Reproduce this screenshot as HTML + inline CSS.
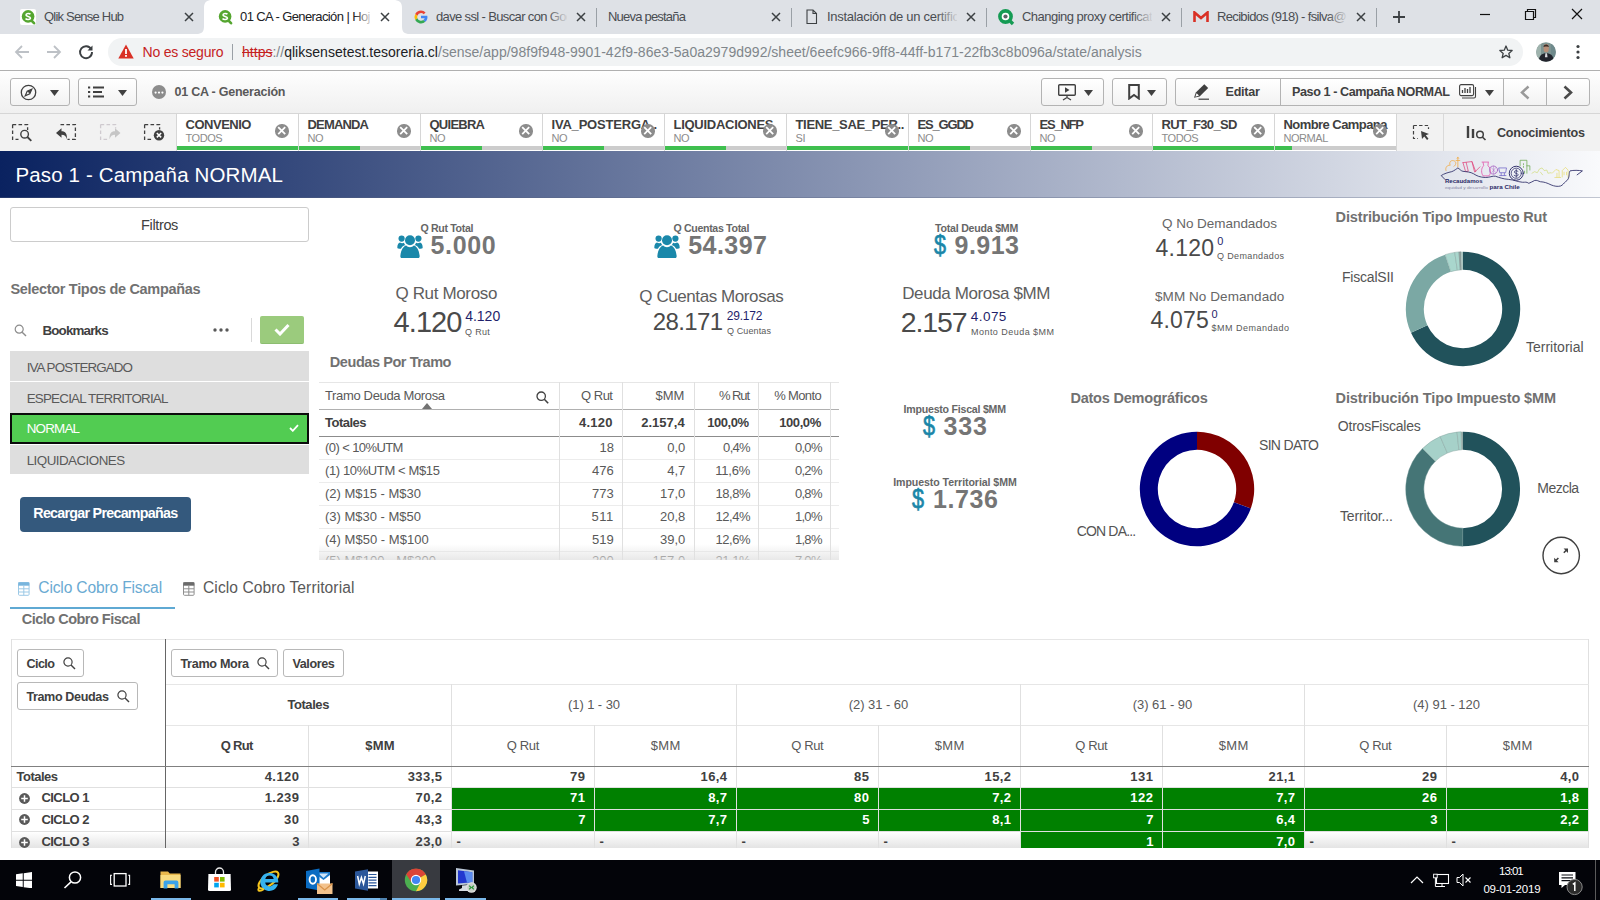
<!DOCTYPE html>
<html>
<head>
<meta charset="utf-8">
<title>01 CA - Generación</title>
<style>
*{box-sizing:border-box;margin:0;padding:0}
html,body{width:1600px;height:900px;overflow:hidden;background:#fff;font-family:"Liberation Sans",sans-serif;color:#595959}
.abs{position:absolute}
#root{position:relative;width:1600px;height:900px;overflow:hidden;background:#fff}
/* chrome */
#tabbar{position:absolute;left:0;top:0;width:1600px;height:34px;background:#dee1e6}
.tab{position:absolute;top:0;height:34px;font-size:13px;color:#4a4d52;white-space:nowrap}
.tab .tt{position:absolute;left:44px;top:9px;width:118px;overflow:hidden;white-space:nowrap}
.tab .x{position:absolute;left:184px;top:8px;font-size:15px;color:#3c4043}
.tab .sep{position:absolute;left:196px;top:8px;width:1px;height:19px;background:#9aa0a6}
#addr{position:absolute;left:0;top:34px;width:1600px;height:36px;background:#fff}
#addrline{position:absolute;left:0;top:70px;width:1600px;height:1px;background:#b0b0b0}
#omni{position:absolute;left:108px;top:4px;width:1415px;height:28px;border-radius:14px;background:#f1f3f4}
/* qlik toolbar */
#qtb{position:absolute;left:0;top:71px;width:1600px;height:42px;background:linear-gradient(#fefefe,#f0f0f0)}
.qbtn{position:absolute;top:7px;height:28px;border:1px solid #b3b3b3;border-radius:3px;background:linear-gradient(#fff,#f2f2f2)}
#selbar{position:absolute;left:0;top:113px;width:1600px;height:38px;background:#f2f2f2;border-top:1px solid #d6d6d6}
.sel{position:absolute;top:0;height:37px;width:121px;background:#fff;box-shadow:1px 0 0 #d6d6d6,-1px 0 0 #d6d6d6}
.sel .n{position:absolute;left:8.5px;top:3px;font-size:13px;font-weight:bold;color:#404040;white-space:nowrap}
.sel .v{position:absolute;left:8.5px;top:18px;font-size:11px;color:#8c8c8c;white-space:nowrap;letter-spacing:-0.45px}
.sel .bar{position:absolute;left:0;top:32px;height:4px;width:121px;background:#cccccc}
.sel .bar i{display:block;height:4px;background:#3fbf4f}
.sel .cx{position:absolute;left:98.3px;top:10.2px;width:13.4px;height:13.4px;border-radius:50%;background:#8c8c8c}
#titleband{position:absolute;left:0;top:151px;width:1600px;height:47px;background:linear-gradient(90deg,#0a2260 0%,#0d2562 1.5%,#f9fafc 100%);border-bottom:1px solid rgba(90,100,130,0.35)}
#titleband .t{position:absolute;left:15.5px;top:11.7px;font-size:20.5px;color:#fff;white-space:nowrap}
.h{position:absolute;font-size:14px;font-weight:bold;color:#717171;white-space:nowrap}
.txt{position:absolute;white-space:nowrap}
#taskbar{position:absolute;left:0;top:860px;width:1600px;height:40px;background:#030409}
</style>
</head>
<body>
<div id="root">
<div id="tabbar">
  <!-- active tab shape -->
  <svg class="abs" style="left:196px;top:0" width="214" height="34"><path d="M0 34 C6 34 8 32 8 26 L8 8 C8 2 11 0 16 0 L197 0 C203 0 206 2 206 8 L206 26 C206 32 208 34 214 34 Z" fill="#fff"/></svg>
  <!-- tab1 -->
  <div class="tab" style="left:8px;width:195px"><svg class="abs" style="left:12px;top:9px" width="16" height="16"><rect x="0" y="0" width="16" height="16" rx="2" fill="#fff"/><circle cx="8.1" cy="7.4" r="6.3" fill="#55a630"/><path d="M10.5 10.5L14 14.2" stroke="#55a630" stroke-width="2.6" stroke-linecap="round"/><path d="M10.4 5.3C9.6 4.2 6 4.1 6 6C6 7.9 10.4 6.9 10.4 9C10.4 10.9 6.4 10.8 5.6 9.5" fill="none" stroke="#fff" stroke-width="1.6"/></svg><span class="tt" style="left:36px"><span style="letter-spacing:-0.79px;display:inline-block">Qlik Sense Hub</span></span><svg class="abs" style="left:176px;top:12px" width="10" height="10"><path d="M1 1L9 9M9 1L1 9" stroke="#3c4043" stroke-width="1.5"/></svg></div>
  <!-- tab2 active -->
  <div class="tab" style="left:204px;width:195px"><svg class="abs" style="left:13px;top:9px" width="16" height="16"><circle cx="8.1" cy="7.4" r="6.3" fill="#55a630"/><path d="M10.5 10.5L14 14.2" stroke="#55a630" stroke-width="2.6" stroke-linecap="round"/><path d="M10.4 5.3C9.6 4.2 6 4.1 6 6C6 7.9 10.4 6.9 10.4 9C10.4 10.9 6.4 10.8 5.6 9.5" fill="none" stroke="#fff" stroke-width="1.6"/></svg><span class="tt" style="left:36px;width:130px;color:#202124"><span style="letter-spacing:-0.60px;display:inline-block">01 CA - Generación | Hoj</span></span><div class="abs" style="left:150px;top:6px;width:20px;height:22px;background:linear-gradient(90deg,rgba(255,255,255,0),#fff)"></div><svg class="abs" style="left:176px;top:12px" width="10" height="10"><path d="M1 1L9 9M9 1L1 9" stroke="#3c4043" stroke-width="1.5"/></svg></div>
  <!-- tab3 -->
  <div class="tab" style="left:401px;width:195px"><svg class="abs" style="left:12px;top:9px" width="16" height="16" viewBox="0 0 16 16"><path d="M8 1.5A6.5 6.5 0 0 1 12.6 3.4L10.7 5.2A3.9 3.9 0 0 0 8 4.1Z" fill="#ea4335"/><path d="M8 1.5A6.5 6.5 0 0 0 2.2 5.1L4.4 6.8A3.9 3.9 0 0 1 8 4.1Z" fill="#ea4335"/><path d="M2.2 5.1A6.5 6.5 0 0 0 2.2 10.9L4.4 9.2A3.9 3.9 0 0 1 4.4 6.8Z" fill="#fbbc05"/><path d="M2.2 10.9A6.5 6.5 0 0 0 12.4 12.8L10.3 11.1A3.9 3.9 0 0 1 4.4 9.2Z" fill="#34a853"/><path d="M14.3 6.7H8V9.3H11.7A3.5 3.5 0 0 1 10.3 11.1L12.4 12.8A6.5 6.5 0 0 0 14.3 6.7Z" fill="#4285f4"/></svg><span class="tt" style="left:35px;width:131px"><span style="letter-spacing:-0.64px;display:inline-block">dave ssl - Buscar con Goo</span></span><div class="abs" style="left:146px;top:6px;width:22px;height:22px;background:linear-gradient(90deg,rgba(222,225,230,0),#dee1e6)"></div><svg class="abs" style="left:175px;top:12px" width="10" height="10"><path d="M1 1L9 9M9 1L1 9" stroke="#3c4043" stroke-width="1.5"/></svg><div class="sep" style="left:195px"></div></div>
  <!-- tab4 -->
  <div class="tab" style="left:596px;width:195px"><span class="tt" style="left:12px"><span style="letter-spacing:-0.79px;display:inline-block">Nueva pestaña</span></span><svg class="abs" style="left:175px;top:12px" width="10" height="10"><path d="M1 1L9 9M9 1L1 9" stroke="#3c4043" stroke-width="1.5"/></svg><div class="sep" style="left:195px"></div></div>
  <!-- tab5 -->
  <div class="tab" style="left:791px;width:195px"><svg class="abs" style="left:14.5px;top:8.5px" width="12" height="16"><path d="M1 1H7L10.5 4.5V14.5H1Z M7 1V4.5H10.5" fill="none" stroke="#3c4043" stroke-width="1.1"/></svg><span class="tt" style="left:36px;width:130px"><span style="letter-spacing:-0.30px;display:inline-block">Instalación de un certific</span></span><div class="abs" style="left:146px;top:6px;width:22px;height:22px;background:linear-gradient(90deg,rgba(222,225,230,0),#dee1e6)"></div><svg class="abs" style="left:175px;top:12px" width="10" height="10"><path d="M1 1L9 9M9 1L1 9" stroke="#3c4043" stroke-width="1.5"/></svg><div class="sep" style="left:195px"></div></div>
  <!-- tab6 -->
  <div class="tab" style="left:986px;width:195px"><svg class="abs" style="left:11px;top:8px" width="18" height="18"><circle cx="8.5" cy="8.5" r="5.6" fill="#fff" stroke="#159b54" stroke-width="3.6"/><circle cx="8.5" cy="8.5" r="2.1" fill="#5f6368"/><path d="M12 12 L16 16" stroke="#159b54" stroke-width="3.4"/></svg><span class="tt" style="left:36px;width:130px"><span style="letter-spacing:-0.52px;display:inline-block">Changing proxy certificat</span></span><div class="abs" style="left:146px;top:6px;width:22px;height:22px;background:linear-gradient(90deg,rgba(222,225,230,0),#dee1e6)"></div><svg class="abs" style="left:175px;top:12px" width="10" height="10"><path d="M1 1L9 9M9 1L1 9" stroke="#3c4043" stroke-width="1.5"/></svg><div class="sep" style="left:195px"></div></div>
  <!-- tab7 -->
  <div class="tab" style="left:1181px;width:195px"><svg class="abs" style="left:12px;top:11px" width="16" height="12"><path d="M1.5 11V1.5L8 7L14.5 1.5V11" fill="none" stroke="#d93025" stroke-width="2.6"/></svg><span class="tt" style="left:36px;width:130px"><span style="letter-spacing:-0.66px;display:inline-block">Recibidos (918) - fsilva@</span></span><div class="abs" style="left:146px;top:6px;width:22px;height:22px;background:linear-gradient(90deg,rgba(222,225,230,0),#dee1e6)"></div><svg class="abs" style="left:175px;top:12px" width="10" height="10"><path d="M1 1L9 9M9 1L1 9" stroke="#3c4043" stroke-width="1.5"/></svg><div class="sep" style="left:195px"></div></div>
  <!-- plus -->
  <svg class="abs" style="left:1392px;top:10px" width="14" height="14"><path d="M7 1V13M1 7H13" stroke="#3c4043" stroke-width="1.8"/></svg>
  <!-- window ctrls -->
  <svg class="abs" style="left:1479px;top:8px" width="12" height="12"><path d="M1 6.5H11" stroke="#111" stroke-width="1.2"/></svg>
  <svg class="abs" style="left:1524px;top:8px" width="13" height="13"><path d="M1.5 3.5H9.5V11.5H1.5Z M3.5 3.5V1.5H11.5V9.5H9.5" fill="none" stroke="#111" stroke-width="1.2"/></svg>
  <svg class="abs" style="left:1571px;top:8px" width="12" height="12"><path d="M1 1L11 11M11 1L1 11" stroke="#111" stroke-width="1.2"/></svg>
</div>
<div id="addr">
  <svg class="abs" style="left:14px;top:10px" width="16" height="16"><path d="M15 8H2M8 2L2 8L8 14" fill="none" stroke="#bdc1c6" stroke-width="1.8"/></svg>
  <svg class="abs" style="left:46px;top:10px" width="16" height="16"><path d="M1 8H14M8 2L14 8L8 14" fill="none" stroke="#bdc1c6" stroke-width="1.8"/></svg>
  <svg class="abs" style="left:78px;top:10px" width="16" height="16"><path d="M13.2 5.2A6 6 0 1 0 14 8" fill="none" stroke="#3c4043" stroke-width="1.9"/><path d="M14.5 1.5V6.5H9.5Z" fill="#3c4043"/></svg>
  <div id="omni">
    <svg class="abs" style="left:10px;top:6px" width="16" height="15"><path d="M8 0.5L15.7 14.5H0.3Z" fill="#d93025"/><rect x="7.1" y="5" width="1.8" height="5" fill="#fff"/><rect x="7.1" y="11" width="1.8" height="1.8" fill="#fff"/></svg>
    <div class="txt" style="letter-spacing:-0.21px;left:34.5px;top:6px;font-size:14px;color:#c5221f">No es seguro</div>
    <div class="abs" style="left:124px;top:6px;width:1px;height:16px;background:#9aa0a6"></div>
    <div class="txt" style="letter-spacing:0.02px;left:134px;top:6px;font-size:14px;color:#80868b"><span style="color:#c5221f;text-decoration:line-through">https</span>://<span style="color:#202124">qliksensetest.tesoreria.cl</span>/sense/app/98f9f948-9901-42f9-86e3-5a0a2979d992/sheet/6eefc966-9ff8-44ff-b171-22fb3c8b096a/state/analysis</div>
    <svg class="abs" style="left:1390.7px;top:7px" width="14" height="14" viewBox="0 0 16 16"><path d="M8 1.2L10 5.9L15 6.3L11.2 9.6L12.4 14.6L8 11.9L3.6 14.6L4.8 9.6L1 6.3L6 5.9Z" fill="none" stroke="#3c4043" stroke-width="1.5" stroke-linejoin="round"/></svg>
  </div>
  <svg class="abs" style="left:1535.7px;top:8px" width="20" height="20"><defs><clipPath id="avc"><circle cx="10" cy="10" r="9.8"/></clipPath></defs><g clip-path="url(#avc)"><rect width="20" height="20" fill="#7d9492"/><rect x="0" width="5" height="20" fill="#9fb3ad"/><rect x="15" width="5" height="20" fill="#6f8a8c"/><path d="M7.6 5.2a2.6 3.1 0 0 1 5.2 0v2a2.6 3.1 0 0 1 -5.2 0Z" fill="#b98f78"/><path d="M7.4 5.2C7.6 3.2 9 2.6 10.2 2.6S12.9 3.400000000000001 13 5.2C12 4.4 8.5 4.4 7.4 5.2Z" fill="#3a2d27"/><path d="M2.5 20C3 13 6 11.2 10.2 11.2S17.5 13 18 20Z" fill="#22242c"/><path d="M9.4 11.2h1.6l0.5 4h-2.600000000000001Z" fill="#d9d9de"/></g></svg>
  <svg class="abs" style="left:1576px;top:10px" width="4" height="16"><circle cx="2" cy="2.5" r="1.6" fill="#3c4043"/><circle cx="2" cy="8" r="1.6" fill="#3c4043"/><circle cx="2" cy="13.5" r="1.6" fill="#3c4043"/></svg>
</div>
<div id="addrline"></div>
<div id="qtb">
  <div class="qbtn" style="left:10px;width:60px"><svg class="abs" style="left:9px;top:5px" width="17" height="17"><circle cx="8.5" cy="8.5" r="7.2" fill="none" stroke="#404040" stroke-width="1.3"/><path d="M11.8 5.2L9.8 9.8L5.2 11.8L7.2 7.2Z" fill="none" stroke="#404040" stroke-width="1.2"/><path d="M11.8 5.2L9.8 9.8L7.2 7.2Z" fill="#404040"/></svg><svg class="abs" style="left:39px;top:11px" width="9" height="6"><path d="M0 0H9L4.5 6Z" fill="#404040"/></svg></div>
  <div class="qbtn" style="left:78px;width:59px"><svg class="abs" style="left:9px;top:7px" width="16" height="12"><path d="M5 1.5H16M5 6H14M5 10.5H16" stroke="#404040" stroke-width="1.9"/><rect x="0" y="0.5" width="2.2" height="2" fill="#404040"/><rect x="0" y="5" width="2.2" height="2" fill="#404040"/><rect x="0" y="9.5" width="2.2" height="2" fill="#404040"/></svg><svg class="abs" style="left:39px;top:11px" width="9" height="6"><path d="M0 0H9L4.5 6Z" fill="#404040"/></svg></div>
  <svg class="abs" style="left:152px;top:14px" width="14" height="14"><circle cx="7" cy="7" r="7" fill="#8c8c8c"/><circle cx="3.6" cy="7.6" r="1.1" fill="#fff"/><circle cx="7" cy="7.6" r="1.1" fill="#fff"/><circle cx="10.4" cy="7.6" r="1.1" fill="#fff"/></svg>
  <div class="txt" style="letter-spacing:-0.23px;left:174.5px;top:14px;font-size:12.5px;font-weight:bold;color:#595959">01 CA - Generación</div>
  <div class="qbtn" style="left:1041px;width:63px"><svg class="abs" style="left:16px;top:5px" width="19" height="17"><rect x="0.7" y="0.7" width="16.6" height="10.6" rx="1" fill="none" stroke="#404040" stroke-width="1.4"/><path d="M7 3.2V8.8L11.5 6Z" fill="#404040"/><path d="M9 11.5V14M5 16L9 13.5L13 16" fill="none" stroke="#404040" stroke-width="1.3"/></svg><svg class="abs" style="left:42px;top:11px" width="9" height="6"><path d="M0 0H9L4.5 6Z" fill="#404040"/></svg></div>
  <div class="qbtn" style="left:1112px;width:55px"><svg class="abs" style="left:15px;top:5px" width="12" height="16"><path d="M1.2 1H10.8V14.5L6 11L1.2 14.5Z" fill="none" stroke="#404040" stroke-width="2"/></svg><svg class="abs" style="left:34px;top:11px" width="9" height="6"><path d="M0 0H9L4.5 6Z" fill="#404040"/></svg></div>
  <div class="qbtn" style="left:1175px;width:106px;border-radius:3px 0 0 3px"><svg class="abs" style="left:15.5px;top:4px" width="19" height="18"><path d="M2 14.8L3.8 9.6L12.3 1.2L16.2 5.1L7.6 13.400000000000002Z" fill="#404040"/><path d="M4.6 10.2L7 12.6L3.4 13.8Z" fill="#fff"/><path d="M6.5 16.2H17" stroke="#404040" stroke-width="1.2"/></svg><div class="txt" style="letter-spacing:-0.24px;left:49.5px;top:5.5px;font-size:12.6px;font-weight:bold;color:#404040">Editar</div></div>
  <div class="qbtn" style="left:1280px;width:224px;border-radius:0"><div class="txt" style="letter-spacing:-0.42px;left:11px;top:6px;font-size:12.6px;font-weight:bold;color:#404040">Paso 1 - Campaña NORMAL</div><svg class="abs" style="left:178px;top:5px" width="19" height="15"><rect x="0.6" y="0.6" width="14" height="11" rx="1.5" fill="none" stroke="#404040" stroke-width="1.1"/><path d="M3.5 9V6M6 9V4M8.5 9V5M11 9V3" stroke="#404040" stroke-width="1.3"/><path d="M16.5 3V12.5Q16.5 14 15 14H3" fill="none" stroke="#404040" stroke-width="1.1"/></svg><svg class="abs" style="left:204px;top:11px" width="9" height="6"><path d="M0 0H9L4.5 6Z" fill="#404040"/></svg></div>
  <div class="qbtn" style="left:1503px;width:44px;border-radius:0"><svg class="abs" style="left:16px;top:6px" width="10" height="15"><path d="M8.5 1.5L2 7.5L8.5 13.5" fill="none" stroke="#999" stroke-width="2.5"/></svg></div>
  <div class="qbtn" style="left:1546px;width:44px;border-radius:0 3px 3px 0"><svg class="abs" style="left:16px;top:6px" width="10" height="15"><path d="M1.5 1.5L8 7.5L1.5 13.5" fill="none" stroke="#4a4a4a" stroke-width="2.6"/></svg></div>
</div>
<div id="selbar">
  <!-- tool icons -->
  <svg class="abs" style="left:11px;top:9.4px" width="22" height="20"><path d="M1.6 1.6H16.6V7M1.6 1.6V16.4H7.5" fill="none" stroke="#404040" stroke-width="1.3" stroke-dasharray="3.6 2.3"/><circle cx="13.6" cy="11.2" r="3.8" fill="none" stroke="#404040" stroke-width="1.4"/><path d="M16.4 14L20.3 17.9" stroke="#404040" stroke-width="1.8"/></svg>
  <svg class="abs" style="left:55px;top:9.4px" width="22" height="20"><path d="M5.5 1.6H20.400000000000002V16.4H12.5" fill="none" stroke="#404040" stroke-width="1.3" stroke-dasharray="3.6 2.3"/><path d="M1 10L6.5 5.2V8.2C10.5 8.2 12.2 10.8 12 16.2C11 13 9.5 11.7 6.5 11.7V14.8Z" fill="#404040"/></svg>
  <svg class="abs" style="left:99px;top:9.4px" width="22" height="20"><path d="M1.6 1.6H16.6V5.5M1.6 1.6V16.4H9" fill="none" stroke="#cfcacf" stroke-width="1.3" stroke-dasharray="3.6 2.3"/><path d="M21.5 10L16 5.2V8.2C12 8.2 10.3 10.8 10.5 16.2C11.5 13 13 11.7 16 11.7V14.8Z" fill="#c6c6c6"/></svg>
  <svg class="abs" style="left:143px;top:9.4px" width="22" height="20"><path d="M1.6 1.6H16.6V6.5M1.6 1.6V16.4H9" fill="none" stroke="#404040" stroke-width="1.3" stroke-dasharray="3.6 2.3"/><circle cx="16" cy="12.2" r="5.2" fill="#404040"/><path d="M13.8 10L18.2 14.4M18.2 10L13.8 14.4" stroke="#fff" stroke-width="1.5"/></svg>
  <div class="sel" style="left:177px"><div class="n" style="letter-spacing:-0.48px;top:3px">CONVENIO</div><div class="v">TODOS</div><div class="bar"><i style="width:100%"></i></div><div class="cx"><svg width="13.4" height="13.4" style="display:block"><path d="M3.2 3.2L10.2 10.2M10.2 3.2L3.2 10.2" stroke="#fff" stroke-width="1.8"/></svg></div></div>
<div class="sel" style="left:299px"><div class="n" style="letter-spacing:-0.83px;top:3px">DEMANDA</div><div class="v">NO</div><div class="bar"><i style="width:50%"></i></div><div class="cx"><svg width="13.4" height="13.4" style="display:block"><path d="M3.2 3.2L10.2 10.2M10.2 3.2L3.2 10.2" stroke="#fff" stroke-width="1.8"/></svg></div></div>
<div class="sel" style="left:421px"><div class="n" style="letter-spacing:-0.74px;top:3px">QUIEBRA</div><div class="v">NO</div><div class="bar"><i style="width:50%"></i></div><div class="cx"><svg width="13.4" height="13.4" style="display:block"><path d="M3.2 3.2L10.2 10.2M10.2 3.2L3.2 10.2" stroke="#fff" stroke-width="1.8"/></svg></div></div>
<div class="sel" style="left:543px"><div class="n" style="letter-spacing:-0.20px;top:3px">IVA_POSTERGA..</div><div class="v">NO</div><div class="bar"><i style="width:50%"></i></div><div class="cx"><svg width="13.4" height="13.4" style="display:block"><path d="M3.2 3.2L10.2 10.2M10.2 3.2L3.2 10.2" stroke="#fff" stroke-width="1.8"/></svg></div></div>
<div class="sel" style="left:665px"><div class="n" style="letter-spacing:-0.27px;top:3px">LIQUIDACIONES</div><div class="v">NO</div><div class="bar"><i style="width:50%"></i></div><div class="cx"><svg width="13.4" height="13.4" style="display:block"><path d="M3.2 3.2L10.2 10.2M10.2 3.2L3.2 10.2" stroke="#fff" stroke-width="1.8"/></svg></div></div>
<div class="sel" style="left:787px"><div class="n" style="letter-spacing:-0.32px;top:3px">TIENE_SAE_PER..</div><div class="v">SI</div><div class="bar"><i style="width:100%"></i></div><div class="cx"><svg width="13.4" height="13.4" style="display:block"><path d="M3.2 3.2L10.2 10.2M10.2 3.2L3.2 10.2" stroke="#fff" stroke-width="1.8"/></svg></div></div>
<div class="sel" style="left:909px"><div class="n" style="letter-spacing:-1.18px;top:3px">ES_GGDD</div><div class="v">NO</div><div class="bar"><i style="width:50%"></i></div><div class="cx"><svg width="13.4" height="13.4" style="display:block"><path d="M3.2 3.2L10.2 10.2M10.2 3.2L3.2 10.2" stroke="#fff" stroke-width="1.8"/></svg></div></div>
<div class="sel" style="left:1031px"><div class="n" style="letter-spacing:-1.22px;top:3px">ES_NFP</div><div class="v">NO</div><div class="bar"><i style="width:50%"></i></div><div class="cx"><svg width="13.4" height="13.4" style="display:block"><path d="M3.2 3.2L10.2 10.2M10.2 3.2L3.2 10.2" stroke="#fff" stroke-width="1.8"/></svg></div></div>
<div class="sel" style="left:1153px"><div class="n" style="letter-spacing:-0.63px;top:3px">RUT_F30_SD</div><div class="v">TODOS</div><div class="bar"><i style="width:100%"></i></div><div class="cx"><svg width="13.4" height="13.4" style="display:block"><path d="M3.2 3.2L10.2 10.2M10.2 3.2L3.2 10.2" stroke="#fff" stroke-width="1.8"/></svg></div></div>
<div class="sel" style="left:1275px"><div class="n" style="letter-spacing:-0.56px;top:3px">Nombre Campana</div><div class="v">NORMAL</div><div class="bar"><i style="width:14%"></i></div><div class="cx"><svg width="13.4" height="13.4" style="display:block"><path d="M3.2 3.2L10.2 10.2M10.2 3.2L3.2 10.2" stroke="#fff" stroke-width="1.8"/></svg></div></div>

  <div class="abs" style="left:1398px;top:0;width:46px;height:37px;border-right:1px solid #d9d9d9"></div>
  <svg class="abs" style="left:1412px;top:10px" width="20" height="18"><path d="M1.5 1.5H16.5V5M1.5 1.5V14.5H6" fill="none" stroke="#404040" stroke-width="1.2" stroke-dasharray="3.4 2.2"/><path d="M9 7L17 10L13.8 11.3L16.5 14.8L15 16L12.3 12.5L10 15Z" fill="#404040"/></svg>
  <svg class="abs" style="left:1466px;top:10.5px" width="22" height="16"><path d="M2 1V13M7 4V13" stroke="#404040" stroke-width="2.4"/><circle cx="14" cy="9.5" r="3.3" fill="none" stroke="#404040" stroke-width="1.5"/><path d="M16.3 12L19.5 15" stroke="#404040" stroke-width="1.7"/></svg>
  <div class="txt" style="letter-spacing:-0.25px;left:1497px;top:12px;font-size:12.6px;font-weight:bold;color:#404040">Conocimientos</div>
</div>
<div id="titleband"><div class="t" style="letter-spacing:0.14px;top:11.7px">Paso 1 - Campaña NORMAL</div>
<svg class="abs" style="left:1430px;top:1px" width="170" height="48" viewBox="0 0 1600 452" fill="none" stroke-linecap="round" stroke-linejoin="round">
<g stroke-width="7">
<path d="M150 175C140 150 160 120 190 125C175 95 200 70 230 85C250 95 245 125 225 135M255 60L262 50L270 60M262 50V140M245 80H280" stroke="#f1a73c"/>
<path d="M310 100L395 90L430 185M310 100L335 185L360 180L340 98M395 92L420 190L470 140" stroke="#e0457b"/>
<path d="M490 95H550M500 100L505 130C480 150 480 200 500 225H555C575 200 575 150 545 130L548 100" stroke="#e24aa6"/>
<circle cx="598" cy="170" r="38" stroke="#a35bc0"/><path d="M575 145L620 195M620 145L580 195M598 132V208" stroke="#a35bc0" stroke-width="4"/>
<path d="M650 150H720L712 195H660ZM670 200V220M700 200V220M655 222H715" stroke="#6f62c8"/>
<path d="M848 130V78H912V200M880 110V120M880 135V145M912 130H940V170M890 200V180" stroke="#6aa84f"/>
<path d="M960 200L985 185L1010 195L1030 160L1055 150L1075 175L1100 170L1110 200L1140 195M1040 190L1060 215" stroke="#c5d552" stroke-width="5"/>
<path d="M1150 200L1185 165L1215 175V235M1175 240H1230M1195 200V235M1245 235V175L1275 145L1300 170V240M1262 190V215M1285 190V215" stroke="#e3d441" stroke-width="5"/>
</g>
<g stroke="#2a2a66">
<path d="M140 258L105 222C130 205 170 192 205 185C230 175 250 158 262 150C280 160 290 178 310 182C345 186 380 188 410 205C440 225 470 238 520 240C560 242 590 222 615 228C650 240 690 255 740 258C790 262 820 280 870 285C900 286 905 278 930 295C950 290 965 275 985 268C1005 262 1020 275 1040 280C1075 282 1100 290 1140 310C1170 322 1200 328 1230 320C1250 312 1258 295 1275 280C1300 265 1308 245 1310 215C1312 195 1312 185 1318 178C1350 170 1400 172 1435 178L1385 215" stroke-width="8"/>
<circle cx="812" cy="200" r="66" stroke-width="9" fill="#eef0f6"/><circle cx="812" cy="200" r="48" stroke-width="7"/>
<path d="M828 182C815 170 792 176 794 190C797 205 828 198 830 214C831 228 806 232 792 220M812 165V238" stroke-width="7"/>
</g>
<text x="140" y="295" font-family="Liberation Sans, sans-serif" font-weight="bold" font-size="50" fill="#2a2a66" stroke="none" textLength="355" lengthAdjust="spacingAndGlyphs">Recaudamos</text>
<text x="140" y="350" font-family="Liberation Sans, sans-serif" font-size="38" fill="#8a8aa8" stroke="none" textLength="405" lengthAdjust="spacingAndGlyphs">equidad y desarrollo</text>
<text x="560" y="352" font-family="Liberation Sans, sans-serif" font-weight="bold" font-size="50" fill="#2a2a66" stroke="none" textLength="285" lengthAdjust="spacingAndGlyphs">para Chile</text>
</svg>
</div>
<!-- LEFT PANEL -->
<div class="abs" style="left:10px;top:207px;width:299px;height:35px;border:1px solid #ccc;border-radius:3px;background:#fff"></div>
<div class="txt" style="letter-spacing:-0.35px;left:141px;top:217.00px;font-size:14.5px;color:#404040">Filtros</div>
<div class="h" style="letter-spacing:-0.31px;left:10.4px;top:281.00px;font-size:14.5px">Selector Tipos de Campañas</div>
<svg class="abs" style="left:14px;top:324px" width="13" height="13"><circle cx="5.2" cy="5.2" r="4" fill="none" stroke="#8c8c8c" stroke-width="1.2"/><path d="M8.2 8.2L12 12" stroke="#8c8c8c" stroke-width="1.4"/></svg>
<div class="txt" style="letter-spacing:-0.84px;left:42.4px;top:323.00px;font-size:13.4px;font-weight:bold;color:#404040">Bookmarks</div>
<svg class="abs" style="left:213px;top:328px" width="16" height="4"><circle cx="2" cy="2" r="1.7" fill="#595959"/><circle cx="8" cy="2" r="1.7" fill="#595959"/><circle cx="14" cy="2" r="1.7" fill="#595959"/></svg>
<div class="abs" style="left:251px;top:318px;width:1px;height:24px;background:#d9d9d9"></div>
<div class="abs" style="left:260px;top:316px;width:44px;height:28px;background:#9bcb7d;border-radius:2px;border-bottom:1px solid #8cbd70"><svg class="abs" style="left:14px;top:7px" width="16" height="13"><path d="M1.5 6.5L6 11L14.5 2" fill="none" stroke="#fff" stroke-width="3"/></svg></div>
<div class="abs" style="left:10px;top:351px;width:299px;height:123px;background:#fff"></div>
<div class="abs" style="left:10px;top:351px;width:299px;height:29.6px;background:#dedede"></div>
<div class="abs" style="left:10px;top:382px;width:299px;height:31px;background:#dedede"></div>
<div class="abs" style="left:10px;top:412.8px;width:299px;height:31.2px;background:#52cc52;border:2px solid #0b0b0b"></div>
<div class="abs" style="left:10px;top:445px;width:299px;height:29px;background:#dedede"></div>
<div class="txt" style="letter-spacing:-0.91px;left:26.7px;top:360.00px;font-size:13.4px;color:#595959">IVA POSTERGADO</div>
<div class="txt" style="letter-spacing:-0.79px;left:26.7px;top:391.00px;font-size:13.4px;color:#595959">ESPECIAL TERRITORIAL</div>
<div class="txt" style="letter-spacing:-0.80px;left:26.7px;top:421.00px;font-size:13.4px;color:#fff">NORMAL</div>
<svg class="abs" style="left:289px;top:424px" width="10" height="8"><path d="M1 4L3.8 6.8L9 1.2" fill="none" stroke="#fff" stroke-width="1.8"/></svg>
<div class="txt" style="letter-spacing:-0.54px;left:26.7px;top:453.00px;font-size:13.4px;color:#595959">LIQUIDACIONES</div>
<div class="abs" style="left:20px;top:497.2px;width:170.7px;height:34.5px;background:#34597d;border-radius:4px"></div>
<div class="txt" style="letter-spacing:-0.74px;left:33.3px;top:505.00px;font-size:14.3px;font-weight:bold;color:#fff">Recargar Precampañas</div>
<!-- KPIs -->
<svg width="0" height="0" style="position:absolute"><defs><g id="users"><circle cx="13" cy="6.2" r="5" /><path d="M5 24C3.5 24 3.2 23 3.4 21.5C4 16 6.5 12.2 9.2 11.6C10.2 12.6 11.5 13.2 13 13.2S15.8 12.6 16.8 11.600000000000001C19.5 12.2 22 16 22.6 21.5C22.8 23 22.5 24 21 24Z"/><circle cx="4.6" cy="4.6" r="3.1"/><circle cx="21.4" cy="4.6" r="3.1"/><path d="M0.3 13.5C0.3 10.5 1.5 8.6 3 8.400000000000001C4.2 9.3 5.6 9.3 7 8.8C7.2 9.6 7.6 10.3 8.2 10.9C6 11.8 4.6 13 3.9 14.8C1.5 14.8 0.3 14.6 0.3 13.5Z"/><path d="M25.7 13.5C25.7 10.5 24.5 8.6 23 8.400000000000001C21.8 9.3 20.4 9.3 19 8.8C18.8 9.6 18.4 10.3 17.8 10.9C20 11.8 21.4 13 22.1 14.8C24.5 14.8 25.7 14.6 25.7 13.5Z"/></g></defs></svg>
<div class="txt" style="letter-spacing:-0.33px;left:420.4px;top:222.00px;font-weight:bold;font-size:10.6px;color:#666">Q Rut Total</div>
<svg class="abs" style="left:396.8px;top:233.8px" width="26" height="25" fill="#1a88aa"><use href="#users"/></svg>
<div class="txt" style="letter-spacing:0.61px;left:430.6px;top:231.00px;font-size:25px;font-weight:bold;color:#757575">5.000</div>
<div class="txt" style="letter-spacing:-0.32px;left:673.4px;top:222.00px;font-weight:bold;font-size:10.6px;color:#666">Q Cuentas Total</div>
<svg class="abs" style="left:653.8px;top:233.8px" width="26" height="25" fill="#1a88aa"><use href="#users"/></svg>
<div class="txt" style="letter-spacing:0.47px;left:688.2px;top:231.00px;font-size:25px;font-weight:bold;color:#757575">54.397</div>
<div class="txt" style="letter-spacing:-0.22px;left:935px;top:222.00px;font-weight:bold;font-size:10.6px;color:#666">Total Deuda $MM</div>
<div class="txt" style="left:933.9px;top:228.4px;font-size:28.5px;color:#1a86a8;-webkit-text-stroke:0.7px #1a86a8;transform:scaleX(0.76);transform-origin:left top">$</div>
<div class="txt" style="letter-spacing:0.43px;left:954.6px;top:231.00px;font-size:25px;font-weight:bold;color:#757575">9.913</div>

<div class="txt" style="letter-spacing:-0.35px;left:395.4px;top:284.00px;font-size:17px;color:#5e5e5e">Q Rut Moroso</div>
<div class="txt" style="letter-spacing:-0.94px;left:393.6px;top:306.00px;font-size:29px;color:#4a4a4a">4.120</div>
<div class="txt" style="letter-spacing:-0.01px;left:465.2px;top:308.00px;font-size:14px;color:#1f1f6b">4.120</div>
<div class="txt" style="letter-spacing:0.32px;left:465px;top:327.00px;font-size:9px;color:#595959">Q Rut</div>

<div class="txt" style="letter-spacing:-0.42px;left:639.3px;top:287.00px;font-size:17px;color:#5e5e5e">Q Cuentas Morosas</div>
<div class="txt" style="letter-spacing:-0.64px;left:652.8px;top:308.00px;font-size:24px;color:#4a4a4a">28.171</div>
<div class="txt" style="letter-spacing:-0.24px;left:726.8px;top:309.00px;font-size:12px;color:#1f1f6b">29.172</div>
<div class="txt" style="letter-spacing:0.12px;left:727px;top:326.00px;font-size:9px;color:#595959">Q Cuentas</div>

<div class="txt" style="letter-spacing:-0.38px;left:902.2px;top:284.00px;font-size:17px;color:#5e5e5e">Deuda Morosa $MM</div>
<div class="txt" style="letter-spacing:-1.11px;left:900.8px;top:306.00px;font-size:28.5px;color:#4a4a4a">2.157</div>
<div class="txt" style="letter-spacing:0.45px;left:970.8px;top:309.00px;font-size:13.5px;color:#1f1f6b">4.075</div>
<div class="txt" style="letter-spacing:0.46px;left:971px;top:327.00px;font-size:9px;color:#595959">Monto Deuda $MM</div>

<div class="txt" style="letter-spacing:-0.04px;left:1162px;top:216.00px;font-size:13.5px;color:#666">Q No Demandados</div>
<div class="txt" style="letter-spacing:0.23px;left:1155.6px;top:235.00px;font-size:23px;color:#4a4a4a">4.120</div>
<div class="txt" style="left:1217.2px;top:235.00px;font-size:11px;color:#1f1f6b">0</div>
<div class="txt" style="letter-spacing:0.36px;left:1217px;top:251.00px;font-size:9px;color:#595959">Q Demandados</div>

<div class="txt" style="letter-spacing:0.07px;left:1155px;top:289.00px;font-size:13.5px;color:#666">$MM No Demandado</div>
<div class="txt" style="letter-spacing:0.16px;left:1150.6px;top:307.00px;font-size:23px;color:#4a4a4a">4.075</div>
<div class="txt" style="left:1211.4px;top:308.00px;font-size:11px;color:#1f1f6b">0</div>
<div class="txt" style="letter-spacing:0.50px;left:1211.5px;top:323.00px;font-size:9px;color:#595959">$MM Demandado</div>

<div class="txt" style="letter-spacing:-0.23px;left:903.6px;top:403.00px;font-weight:bold;font-size:10.6px;color:#666">Impuesto Fiscal $MM</div>
<div class="txt" style="left:922.5px;top:409.1px;font-size:28.5px;color:#1a86a8;-webkit-text-stroke:0.7px #1a86a8;transform:scaleX(0.76);transform-origin:left top">$</div>
<div class="txt" style="letter-spacing:0.94px;left:943.4px;top:412.00px;font-size:25px;font-weight:bold;color:#757575">333</div>
<div class="txt" style="letter-spacing:-0.07px;left:893.2px;top:476.00px;font-weight:bold;font-size:10.6px;color:#666">Impuesto Territorial $MM</div>
<div class="txt" style="left:912px;top:482.0px;font-size:28.5px;color:#1a86a8;-webkit-text-stroke:0.7px #1a86a8;transform:scaleX(0.76);transform-origin:left top">$</div>
<div class="txt" style="letter-spacing:0.56px;left:933px;top:485.00px;font-size:25px;font-weight:bold;color:#757575">1.736</div>
<!-- TABLE1 -->
<div class="h" style="letter-spacing:-0.43px;left:329.8px;top:354.00px;font-size:14.5px">Deudas Por Tramo</div>
<div class="abs" id="t1" style="left:319px;top:382px;width:520px;height:178px;overflow:hidden;font-size:13px;color:#595959">
<div class="abs" style="left:0;top:0;width:520px;height:1px;background:#e6e6e6"></div>
<div class="abs" style="left:0;top:77px;width:520px;height:1px;background:#ececec"></div>
<div class="abs" style="left:0;top:100px;width:520px;height:1px;background:#ececec"></div>
<div class="abs" style="left:0;top:123px;width:520px;height:1px;background:#ececec"></div>
<div class="abs" style="left:0;top:146px;width:520px;height:1px;background:#ececec"></div>
<div class="abs" style="left:0;top:169px;width:520px;height:1px;background:#ececec"></div>
<div class="abs" style="left:0;top:27px;width:520px;height:1px;background:#b0b0b0"></div>
<div class="abs" style="left:0;top:54px;width:520px;height:1px;background:#8c8c8c"></div>
<div class="abs" style="left:240px;top:0;width:1px;height:178px;background:#e0e0e0"></div>
<div class="abs" style="left:303px;top:0;width:1px;height:178px;background:#e0e0e0"></div>
<div class="abs" style="left:375px;top:0;width:1px;height:178px;background:#e0e0e0"></div>
<div class="abs" style="left:439px;top:0;width:1px;height:178px;background:#e0e0e0"></div>
<div class="abs" style="left:511px;top:0;width:1px;height:178px;background:#e0e0e0"></div>
<div class="txt" style="letter-spacing:-0.35px;left:6px;top:6px;font-size:13px">Tramo Deuda Morosa</div>
<svg class="abs" style="left:217px;top:9px" width="13" height="13"><circle cx="5.2" cy="5.2" r="4.2" fill="none" stroke="#404040" stroke-width="1.3"/><path d="M8.3 8.3L12.2 12.2" stroke="#404040" stroke-width="1.6"/></svg>
<svg class="abs" style="left:103px;top:21px" width="10" height="6"><path d="M0 6L5 0L10 6Z" fill="#737373"/></svg>
<div class="txt" style="letter-spacing:-0.49px;right:226.5px;top:5.5px;font-size:13px;">Q Rut</div>
<div class="txt" style="letter-spacing:0.05px;right:154.5px;top:5.5px;font-size:13px;">$MM</div>
<div class="txt" style="letter-spacing:-1.10px;right:90px;top:5.5px;font-size:13px;">% Rut</div>
<div class="txt" style="letter-spacing:-0.64px;right:18px;top:5.5px;font-size:13px;">% Monto</div>
<div class="txt" style="letter-spacing:-0.51px;left:6px;top:32.5px;font-weight:bold;color:#404040">Totales</div>
<div class="txt" style="letter-spacing:0.21px;right:226.29999999999995px;top:32.5px;font-size:13px;font-weight:bold;color:#404040;">4.120</div>
<div class="txt" style="letter-spacing:-0.01px;right:154.39999999999998px;top:32.5px;font-size:13px;font-weight:bold;color:#404040;">2.157,4</div>
<div class="txt" style="letter-spacing:-0.46px;right:90.39999999999998px;top:32.5px;font-size:13px;font-weight:bold;color:#404040;">100,0%</div>
<div class="txt" style="letter-spacing:-0.42px;right:18.200000000000045px;top:32.5px;font-size:13px;font-weight:bold;color:#404040;">100,0%</div>
<div class="txt" style="letter-spacing:-0.59px;left:6px;top:57.69999999999999px">(0) &lt; 10%UTM</div>
<div class="txt" style="letter-spacing:-0.07px;right:225.20000000000005px;top:57.69999999999999px;font-size:13px;">18</div>
<div class="txt" style="letter-spacing:-0.04px;right:153.70000000000005px;top:57.69999999999999px;font-size:13px;">0,0</div>
<div class="txt" style="letter-spacing:-0.68px;right:89px;top:57.69999999999999px;font-size:13px;">0,4%</div>
<div class="txt" style="letter-spacing:-0.68px;right:17.200000000000045px;top:57.69999999999999px;font-size:13px;">0,0%</div>
<div class="txt" style="letter-spacing:-0.38px;left:6px;top:80.60000000000002px">(1) 10%UTM &lt; M$15</div>
<div class="txt" style="letter-spacing:0.05px;right:225.20000000000005px;top:80.60000000000002px;font-size:13px;">476</div>
<div class="txt" style="letter-spacing:-0.04px;right:153.70000000000005px;top:80.60000000000002px;font-size:13px;">4,7</div>
<div class="txt" style="letter-spacing:-0.23px;right:89px;top:80.60000000000002px;font-size:13px;">11,6%</div>
<div class="txt" style="letter-spacing:-0.68px;right:17.200000000000045px;top:80.60000000000002px;font-size:13px;">0,2%</div>
<div class="txt" style="letter-spacing:-0.01px;left:6px;top:103.5px">(2) M$15 - M$30</div>
<div class="txt" style="letter-spacing:0.05px;right:225.20000000000005px;top:103.5px;font-size:13px;">773</div>
<div class="txt" style="letter-spacing:0.03px;right:153.70000000000005px;top:103.5px;font-size:13px;">17,0</div>
<div class="txt" style="letter-spacing:-0.47px;right:89px;top:103.5px;font-size:13px;">18,8%</div>
<div class="txt" style="letter-spacing:-0.68px;right:17.200000000000045px;top:103.5px;font-size:13px;">0,8%</div>
<div class="txt" style="letter-spacing:-0.01px;left:6px;top:127.3px">(3) M$30 - M$50</div>
<div class="txt" style="letter-spacing:0.53px;right:225.20000000000005px;top:127.3px;font-size:13px;">511</div>
<div class="txt" style="letter-spacing:0.03px;right:153.70000000000005px;top:127.3px;font-size:13px;">20,8</div>
<div class="txt" style="letter-spacing:-0.47px;right:89px;top:127.3px;font-size:13px;">12,4%</div>
<div class="txt" style="letter-spacing:-0.68px;right:17.200000000000045px;top:127.3px;font-size:13px;">1,0%</div>
<div class="txt" style="letter-spacing:0.02px;left:6px;top:149.5px">(4) M$50 - M$100</div>
<div class="txt" style="letter-spacing:0.05px;right:225.20000000000005px;top:149.5px;font-size:13px;">519</div>
<div class="txt" style="letter-spacing:0.03px;right:153.70000000000005px;top:149.5px;font-size:13px;">39,0</div>
<div class="txt" style="letter-spacing:-0.47px;right:89px;top:149.5px;font-size:13px;">12,6%</div>
<div class="txt" style="letter-spacing:-0.68px;right:17.200000000000045px;top:149.5px;font-size:13px;">1,8%</div>
<div class="txt" style="letter-spacing:0.03px;left:6px;top:171.3px">(5) M$100 - M$200</div>
<div class="txt" style="letter-spacing:0.05px;right:225.20000000000005px;top:171.3px;font-size:13px;">200</div>
<div class="txt" style="letter-spacing:0.06px;right:153.70000000000005px;top:171.3px;font-size:13px;">157,0</div>
<div class="txt" style="letter-spacing:-0.47px;right:89px;top:171.3px;font-size:13px;">21,1%</div>
<div class="txt" style="letter-spacing:-0.68px;right:17.200000000000045px;top:171.3px;font-size:13px;">7,0%</div>
<div class="abs" style="left:0;top:162px;width:520px;height:16px;background:linear-gradient(rgba(255,255,255,0),rgba(225,225,225,0.75))"></div>
</div>
<!-- DONUTS -->
<div class="h" style="letter-spacing:-0.21px;left:1070.4px;top:390.00px;font-size:14.5px">Datos Demográficos</div>
<svg class="abs" style="left:1137.4px;top:429.2px" width="120" height="120"><path d="M60.00 2.80A57.2 57.2 0 0 1 113.82 79.38L96.88 73.28A39.2 39.2 0 0 0 60.00 20.80Z" fill="#800000"/><path d="M113.82 79.38A57.2 57.2 0 1 1 60.00 2.80L60.00 20.80A39.2 39.2 0 1 0 96.88 73.28Z" fill="#000080"/></svg>
<div class="txt" style="letter-spacing:-0.69px;left:1259px;top:437.00px;font-size:14px;color:#545454">SIN DATO</div>
<div class="txt" style="letter-spacing:-0.83px;left:1076.7px;top:523.00px;font-size:14px;color:#545454">CON DA...</div>
<div class="h" style="letter-spacing:-0.14px;left:1335.6px;top:209.00px;font-size:14.5px">Distribución Tipo Impuesto Rut</div>
<svg class="abs" style="left:1402.6px;top:248.5px" width="120" height="120"><path d="M60.00 2.80A57.2 57.2 0 1 1 7.99 83.81L24.36 76.32A39.2 39.2 0 1 0 60.00 20.80Z" fill="#21525b"/><path d="M7.99 83.81A57.2 57.2 0 0 1 42.13 5.66L47.76 22.76A39.2 39.2 0 0 0 24.36 76.32Z" fill="#7ba8a4"/><path d="M42.13 5.66A57.2 57.2 0 0 1 51.74 3.40L54.34 21.21A39.2 39.2 0 0 0 47.76 22.76Z" fill="#a9d6cd" stroke="#8aa6a2" stroke-width="0.5"/><path d="M51.74 3.40A57.2 57.2 0 0 1 56.01 2.94L57.27 20.90A39.2 39.2 0 0 0 54.34 21.21Z" fill="#a9d6cd" stroke="#8aa6a2" stroke-width="0.5"/><path d="M56.01 2.94A57.2 57.2 0 0 1 58.00 2.83L58.63 20.82A39.2 39.2 0 0 0 57.27 20.90Z" fill="#8fa19e" stroke="#7d8f8c" stroke-width="0.5"/><path d="M58.00 2.83A57.2 57.2 0 0 1 60.00 2.80L60.00 20.80A39.2 39.2 0 0 0 58.63 20.82Z" fill="#a9c4bf"/></svg>
<div class="txt" style="letter-spacing:-0.21px;left:1342px;top:269.00px;font-size:14px;color:#545454">FiscalSII</div>
<div class="txt" style="letter-spacing:0.00px;left:1526px;top:339.00px;font-size:14px;color:#545454">Territorial</div>
<div class="h" style="letter-spacing:-0.11px;left:1335.6px;top:390.00px;font-size:14.5px">Distribución Tipo Impuesto $MM</div>
<svg class="abs" style="left:1402.6px;top:429.2px" width="120" height="120"><path d="M60.00 2.80A57.2 57.2 0 1 1 59.70 117.20L59.79 99.20A39.2 39.2 0 1 0 60.00 20.80Z" fill="#21525b"/><path d="M59.70 117.20A57.2 57.2 0 0 1 19.55 19.55L32.28 32.28A39.2 39.2 0 0 0 59.79 99.20Z" fill="#457576" stroke="#5d8787" stroke-width="0.5"/><path d="M19.55 19.55A57.2 57.2 0 0 1 37.19 7.54L44.37 24.05A39.2 39.2 0 0 0 32.28 32.28Z" fill="#a6d1c9" stroke="#8aa6a2" stroke-width="0.5"/><path d="M37.19 7.54A57.2 57.2 0 0 1 54.02 3.11L55.90 21.01A39.2 39.2 0 0 0 44.37 24.05Z" fill="#a6d1c9" stroke="#8aa6a2" stroke-width="0.5"/><path d="M54.02 3.11A57.2 57.2 0 0 1 58.00 2.83L58.63 20.82A39.2 39.2 0 0 0 55.90 21.01Z" fill="#a6d1c9" stroke="#8aa6a2" stroke-width="0.5"/><path d="M58.00 2.83A57.2 57.2 0 0 1 60.00 2.80L60.00 20.80A39.2 39.2 0 0 0 58.63 20.82Z" fill="#93aaa6"/></svg>
<div class="txt" style="letter-spacing:-0.21px;left:1337.8px;top:418.00px;font-size:14px;color:#545454">OtrosFiscales</div>
<div class="txt" style="letter-spacing:-0.53px;left:1537.3px;top:480.00px;font-size:14px;color:#545454">Mezcla</div>
<div class="txt" style="letter-spacing:-0.15px;left:1340px;top:508.00px;font-size:14px;color:#545454">Territor...</div>
<svg class="abs" style="left:1541px;top:535px" width="40" height="40"><circle cx="20.2" cy="20.5" r="18.2" fill="#fff" stroke="#404040" stroke-width="1.4"/><path d="M22.8 17.8L25.6 15" stroke="#404040" stroke-width="1.6"/><path d="M22.6 13.6H27V18Z" fill="#404040"/><path d="M17.4 23L14.6 25.8" stroke="#404040" stroke-width="1.6"/><path d="M17.6 27.2H13.2V22.8Z" fill="#404040"/></svg>
<!-- PIVOT -->
<svg class="abs" style="left:18.1px;top:581.9px" width="12" height="14"><rect x="0.5" y="0.5" width="10.6" height="12.8" rx="1" fill="#fff" stroke="#9cc9e6" stroke-width="1"/><rect x="0.3" y="0.3" width="11" height="3.4" fill="#78b5dd"/><path d="M0.5 6.8H11M0.5 10H11M5.8 3.5V13.2" stroke="#9cc9e6" stroke-width="1"/></svg>
<div class="txt" style="letter-spacing:-0.16px;left:38.3px;top:579.00px;font-size:15.6px;color:#6aaad2">Ciclo Cobro Fiscal</div>
<div class="abs" style="left:10px;top:607px;width:164.8px;height:2px;background:#5fa9d3"></div>
<svg class="abs" style="left:182.6px;top:581.9px" width="12" height="14"><rect x="0.5" y="0.5" width="10.6" height="12.8" rx="1" fill="#fff" stroke="#8f8f8f" stroke-width="1"/><rect x="0.3" y="0.3" width="11" height="3.4" fill="#6b6b6b"/><path d="M0.5 6.8H11M0.5 10H11M5.8 3.5V13.2" stroke="#8f8f8f" stroke-width="1"/></svg>
<div class="txt" style="letter-spacing:0.08px;left:203px;top:579.00px;font-size:15.6px;color:#595959">Ciclo Cobro Territorial</div>
<div class="h" style="letter-spacing:-0.51px;left:21.8px;top:611.00px;font-size:14.5px">Ciclo Cobro Fiscal</div>
<div class="abs" id="pv" style="left:0;top:0;width:1600px;height:848px;overflow:hidden;font-size:13px;color:#404040">
<div class="abs" style="left:11px;top:832px;width:1578px;height:16px;background:linear-gradient(#fff,#e4e4e4)"></div>
<div class="abs" style="left:11px;top:639px;width:1578px;height:1px;background:#e6e6e6"></div>
<div class="abs" style="left:11px;top:639px;width:1px;height:209px;background:#e0e0e0"></div>
<div class="abs" style="left:1588px;top:639px;width:1px;height:209px;background:#e0e0e0"></div>
<div class="abs" style="left:166px;top:684px;width:1423px;height:1px;background:#e6e6e6"></div>
<div class="abs" style="left:166px;top:725px;width:1423px;height:1px;background:#e6e6e6"></div>
<div class="abs" style="left:11px;top:787px;width:1578px;height:1px;background:#e0e0e0"></div>
<div class="abs" style="left:11px;top:809px;width:1578px;height:1px;background:#e0e0e0"></div>
<div class="abs" style="left:11px;top:831px;width:1578px;height:1px;background:#e0e0e0"></div>
<div class="abs" style="left:308px;top:725px;width:1px;height:123px;background:#e0e0e0"></div>
<div class="abs" style="left:451px;top:684px;width:1px;height:164px;background:#e0e0e0"></div>
<div class="abs" style="left:594px;top:725px;width:1px;height:123px;background:#e0e0e0"></div>
<div class="abs" style="left:736px;top:684px;width:1px;height:164px;background:#e0e0e0"></div>
<div class="abs" style="left:878px;top:725px;width:1px;height:123px;background:#e0e0e0"></div>
<div class="abs" style="left:1020px;top:684px;width:1px;height:164px;background:#e0e0e0"></div>
<div class="abs" style="left:1162px;top:725px;width:1px;height:123px;background:#e0e0e0"></div>
<div class="abs" style="left:1304px;top:684px;width:1px;height:164px;background:#e0e0e0"></div>
<div class="abs" style="left:1446px;top:725px;width:1px;height:123px;background:#e0e0e0"></div>
<div class="abs" style="left:165px;top:639px;width:1px;height:209px;background:#666"></div>
<div class="abs" style="left:11px;top:766px;width:1578px;height:1px;background:#808080"></div>
<div class="abs" style="left:17px;top:649px;width:67px;height:28px;border:1px solid #b8b8b8;border-radius:3px;background:#fff"></div>
<div class="txt" style="letter-spacing:-0.55px;left:26.4px;top:657.00px;font-size:12.6px;font-weight:bold;color:#404040">Ciclo</div>
<svg class="abs" style="left:63px;top:657px" width="13" height="13"><circle cx="5" cy="5" r="4.1" fill="none" stroke="#404040" stroke-width="1.2"/><path d="M8 8L12 12" stroke="#404040" stroke-width="1.4"/></svg>
<div class="abs" style="left:17px;top:682px;width:121px;height:28px;border:1px solid #b8b8b8;border-radius:3px;background:#fff"></div>
<div class="txt" style="letter-spacing:-0.39px;left:26.4px;top:690.00px;font-size:12.6px;font-weight:bold;color:#404040">Tramo Deudas</div>
<svg class="abs" style="left:117px;top:690px" width="13" height="13"><circle cx="5" cy="5" r="4.1" fill="none" stroke="#404040" stroke-width="1.2"/><path d="M8 8L12 12" stroke="#404040" stroke-width="1.4"/></svg>
<div class="abs" style="left:171px;top:649px;width:107px;height:28px;border:1px solid #b8b8b8;border-radius:3px;background:#fff"></div>
<div class="txt" style="letter-spacing:-0.30px;left:180.4px;top:657.00px;font-size:12.6px;font-weight:bold;color:#404040">Tramo Mora</div>
<svg class="abs" style="left:257px;top:657px" width="13" height="13"><circle cx="5" cy="5" r="4.1" fill="none" stroke="#404040" stroke-width="1.2"/><path d="M8 8L12 12" stroke="#404040" stroke-width="1.4"/></svg>
<div class="abs" style="left:283px;top:649px;width:61px;height:28px;border:1px solid #b8b8b8;border-radius:3px;background:#fff"></div>
<div class="txt" style="letter-spacing:-0.39px;left:292.4px;top:657.00px;font-size:12.6px;font-weight:bold;color:#404040">Valores</div>
<div class="txt" style="letter-spacing:-0.43px;left:287.4px;top:696.7px;font-size:13px;color:#404040;font-weight:bold;">Totales</div>
<div class="txt" style="letter-spacing:-0.08px;left:568.0px;top:696.7px;font-size:13px;color:#595959;">(1) 1 - 30</div>
<div class="txt" style="letter-spacing:-0.05px;left:848.8px;top:696.7px;font-size:13px;color:#595959;">(2) 31 - 60</div>
<div class="txt" style="letter-spacing:-0.05px;left:1132.8px;top:696.7px;font-size:13px;color:#595959;">(3) 61 - 90</div>
<div class="txt" style="letter-spacing:-0.02px;left:1413.0px;top:696.7px;font-size:13px;color:#595959;">(4) 91 - 120</div>
<div class="txt" style="letter-spacing:-0.72px;left:220.8px;top:737.5px;font-size:13px;color:#404040;font-weight:bold;">Q Rut</div>
<div class="txt" style="letter-spacing:0.30px;left:365.2px;top:737.5px;font-size:13px;color:#404040;font-weight:bold;">$MM</div>
<div class="txt" style="letter-spacing:-0.37px;left:506.8px;top:737.5px;font-size:13px;color:#595959;">Q Rut</div>
<div class="txt" style="letter-spacing:0.30px;left:650.8px;top:737.5px;font-size:13px;color:#595959;">$MM</div>
<div class="txt" style="letter-spacing:-0.37px;left:791.2px;top:737.5px;font-size:13px;color:#595959;">Q Rut</div>
<div class="txt" style="letter-spacing:0.30px;left:934.8px;top:737.5px;font-size:13px;color:#595959;">$MM</div>
<div class="txt" style="letter-spacing:-0.37px;left:1075.2px;top:737.5px;font-size:13px;color:#595959;">Q Rut</div>
<div class="txt" style="letter-spacing:0.30px;left:1218.8px;top:737.5px;font-size:13px;color:#595959;">$MM</div>
<div class="txt" style="letter-spacing:-0.37px;left:1359.2px;top:737.5px;font-size:13px;color:#595959;">Q Rut</div>
<div class="txt" style="letter-spacing:0.30px;left:1502.8px;top:737.5px;font-size:13px;color:#595959;">$MM</div>
<div class="txt" style="letter-spacing:-0.51px;left:16.5px;top:768.5px;font-weight:bold;color:#404040">Totales</div>
<div class="txt" style="letter-spacing:0.46px;right:1300.5px;top:768.5px;font-weight:bold;color:#404040">4.120</div>
<div class="txt" style="letter-spacing:0.46px;right:1157.5px;top:768.5px;font-weight:bold;color:#404040">333,5</div>
<div class="txt" style="letter-spacing:0.53px;right:1014.5px;top:768.5px;font-weight:bold;color:#404040">79</div>
<div class="txt" style="letter-spacing:0.43px;right:872.5px;top:768.5px;font-weight:bold;color:#404040">16,4</div>
<div class="txt" style="letter-spacing:0.53px;right:730.5px;top:768.5px;font-weight:bold;color:#404040">85</div>
<div class="txt" style="letter-spacing:0.43px;right:588.5px;top:768.5px;font-weight:bold;color:#404040">15,2</div>
<div class="txt" style="letter-spacing:0.55px;right:446.5px;top:768.5px;font-weight:bold;color:#404040">131</div>
<div class="txt" style="letter-spacing:0.43px;right:304.5px;top:768.5px;font-weight:bold;color:#404040">21,1</div>
<div class="txt" style="letter-spacing:0.53px;right:162.5px;top:768.5px;font-weight:bold;color:#404040">29</div>
<div class="txt" style="letter-spacing:0.41px;right:20.5px;top:768.5px;font-weight:bold;color:#404040">4,0</div>
<svg class="abs" style="left:18.5px;top:792.5px" width="11" height="11"><circle cx="5.5" cy="5.5" r="5.4" fill="#595959"/><path d="M5.5 2.2V8.8M2.2 5.5H8.8" stroke="#fff" stroke-width="1.5"/></svg>
<div class="txt" style="letter-spacing:-0.55px;left:41.4px;top:790px;font-weight:bold;color:#404040">CICLO 1</div>
<div class="txt" style="letter-spacing:0.46px;right:1300.5px;top:790px;font-weight:bold;color:#404040">1.239</div>
<div class="txt" style="letter-spacing:0.43px;right:1157.5px;top:790px;font-weight:bold;color:#404040">70,2</div>
<div class="abs" style="left:452px;top:788px;width:142px;height:21px;background:#008000"></div>
<div class="txt" style="letter-spacing:0.53px;right:1014.5px;top:790px;font-weight:bold;color:#fff">71</div>
<div class="abs" style="left:595px;top:788px;width:141px;height:21px;background:#008000"></div>
<div class="txt" style="letter-spacing:0.41px;right:872.5px;top:790px;font-weight:bold;color:#fff">8,7</div>
<div class="abs" style="left:737px;top:788px;width:141px;height:21px;background:#008000"></div>
<div class="txt" style="letter-spacing:0.53px;right:730.5px;top:790px;font-weight:bold;color:#fff">80</div>
<div class="abs" style="left:879px;top:788px;width:141px;height:21px;background:#008000"></div>
<div class="txt" style="letter-spacing:0.41px;right:588.5px;top:790px;font-weight:bold;color:#fff">7,2</div>
<div class="abs" style="left:1021px;top:788px;width:141px;height:21px;background:#008000"></div>
<div class="txt" style="letter-spacing:0.55px;right:446.5px;top:790px;font-weight:bold;color:#fff">122</div>
<div class="abs" style="left:1163px;top:788px;width:141px;height:21px;background:#008000"></div>
<div class="txt" style="letter-spacing:0.41px;right:304.5px;top:790px;font-weight:bold;color:#fff">7,7</div>
<div class="abs" style="left:1305px;top:788px;width:141px;height:21px;background:#008000"></div>
<div class="txt" style="letter-spacing:0.53px;right:162.5px;top:790px;font-weight:bold;color:#fff">26</div>
<div class="abs" style="left:1447px;top:788px;width:141px;height:21px;background:#008000"></div>
<div class="txt" style="letter-spacing:0.41px;right:20.5px;top:790px;font-weight:bold;color:#fff">1,8</div>
<svg class="abs" style="left:18.5px;top:814.1px" width="11" height="11"><circle cx="5.5" cy="5.5" r="5.4" fill="#595959"/><path d="M5.5 2.2V8.8M2.2 5.5H8.8" stroke="#fff" stroke-width="1.5"/></svg>
<div class="txt" style="letter-spacing:-0.55px;left:41.4px;top:811.6px;font-weight:bold;color:#404040">CICLO 2</div>
<div class="txt" style="letter-spacing:0.53px;right:1300.5px;top:811.6px;font-weight:bold;color:#404040">30</div>
<div class="txt" style="letter-spacing:0.43px;right:1157.5px;top:811.6px;font-weight:bold;color:#404040">43,3</div>
<div class="abs" style="left:452px;top:810px;width:142px;height:21px;background:#008000"></div>
<div class="txt" style="letter-spacing:-0.03px;right:1014.5px;top:811.6px;font-weight:bold;color:#fff">7</div>
<div class="abs" style="left:595px;top:810px;width:141px;height:21px;background:#008000"></div>
<div class="txt" style="letter-spacing:0.41px;right:872.5px;top:811.6px;font-weight:bold;color:#fff">7,7</div>
<div class="abs" style="left:737px;top:810px;width:141px;height:21px;background:#008000"></div>
<div class="txt" style="letter-spacing:-0.03px;right:730.5px;top:811.6px;font-weight:bold;color:#fff">5</div>
<div class="abs" style="left:879px;top:810px;width:141px;height:21px;background:#008000"></div>
<div class="txt" style="letter-spacing:0.41px;right:588.5px;top:811.6px;font-weight:bold;color:#fff">8,1</div>
<div class="abs" style="left:1021px;top:810px;width:141px;height:21px;background:#008000"></div>
<div class="txt" style="letter-spacing:-0.03px;right:446.5px;top:811.6px;font-weight:bold;color:#fff">7</div>
<div class="abs" style="left:1163px;top:810px;width:141px;height:21px;background:#008000"></div>
<div class="txt" style="letter-spacing:0.41px;right:304.5px;top:811.6px;font-weight:bold;color:#fff">6,4</div>
<div class="abs" style="left:1305px;top:810px;width:141px;height:21px;background:#008000"></div>
<div class="txt" style="letter-spacing:-0.03px;right:162.5px;top:811.6px;font-weight:bold;color:#fff">3</div>
<div class="abs" style="left:1447px;top:810px;width:141px;height:21px;background:#008000"></div>
<div class="txt" style="letter-spacing:0.41px;right:20.5px;top:811.6px;font-weight:bold;color:#fff">2,2</div>
<svg class="abs" style="left:18.5px;top:836.6px" width="11" height="11"><circle cx="5.5" cy="5.5" r="5.4" fill="#595959"/><path d="M5.5 2.2V8.8M2.2 5.5H8.8" stroke="#fff" stroke-width="1.5"/></svg>
<div class="txt" style="letter-spacing:-0.55px;left:41.4px;top:834.2px;font-weight:bold;color:#404040">CICLO 3</div>
<div class="txt" style="letter-spacing:-0.03px;right:1300.5px;top:834.2px;font-weight:bold;color:#404040">3</div>
<div class="txt" style="letter-spacing:0.43px;right:1157.5px;top:834.2px;font-weight:bold;color:#404040">23,0</div>
<div class="txt" style="left:456.5px;top:834.2px;font-weight:bold;color:#404040">-</div>
<div class="txt" style="left:599.5px;top:834.2px;font-weight:bold;color:#404040">-</div>
<div class="txt" style="left:741.5px;top:834.2px;font-weight:bold;color:#404040">-</div>
<div class="txt" style="left:883.5px;top:834.2px;font-weight:bold;color:#404040">-</div>
<div class="abs" style="left:1021px;top:832px;width:141px;height:16px;background:#008000"></div>
<div class="txt" style="letter-spacing:-0.03px;right:446.5px;top:834.2px;font-weight:bold;color:#fff">1</div>
<div class="abs" style="left:1163px;top:832px;width:141px;height:16px;background:#008000"></div>
<div class="txt" style="letter-spacing:0.41px;right:304.5px;top:834.2px;font-weight:bold;color:#fff">7,0</div>
<div class="txt" style="left:1309.5px;top:834.2px;font-weight:bold;color:#404040">-</div>
<div class="txt" style="left:1451.5px;top:834.2px;font-weight:bold;color:#404040">-</div>
</div>
<div id="taskbar">
  <div class="abs" style="left:392px;top:0;width:48px;height:40px;background:#383a40"></div>
  <!-- start -->
  <svg class="abs" style="left:15.6px;top:11.6px" width="16.4" height="16.4" viewBox="0 0 17 17"><path d="M0 2.4L7 1.4V8H0ZM8 1.25L17 0V8H8ZM0 9H7V15.6L0 14.6ZM8 9H17V17L8 15.75Z" fill="#fff"/></svg>
  <!-- search -->
  <svg class="abs" style="left:63px;top:10px" width="20" height="20"><circle cx="12" cy="7.5" r="5.6" fill="none" stroke="#fff" stroke-width="1.5"/><path d="M8 11.8L1.5 18" stroke="#fff" stroke-width="1.6"/></svg>
  <!-- taskview -->
  <svg class="abs" style="left:109px;top:12px" width="22" height="16"><rect x="5.2" y="1.6" width="11.8" height="12.4" fill="none" stroke="#fff" stroke-width="1.3"/><path d="M3 3.2H1.6V12.4H3M19.2 3.2H20.6V12.4H19.2" fill="none" stroke="#fff" stroke-width="1.1"/></svg>
  <!-- explorer -->
  <svg class="abs" style="left:160px;top:10px" width="22" height="19"><path d="M0.5 1.5H8L9.8 3.5H20.5V18H0.5Z" fill="#e9b84c"/><path d="M0.5 5H20.5V18H0.5Z" fill="#f9dc80"/><path d="M3.6 18.6V12.4Q3.6 10.6 5.4 10.6H16.6Q18.4 10.6 18.4 12.4V18.6H14.6V14.2H7.4V18.6Z" fill="#3aa3ea"/></svg>
  <!-- store -->
  <svg class="abs" style="left:208px;top:7px" width="23" height="25"><path d="M7.5 7.5V5A4 4 0 0 1 15.5 5V7.500000000000001" fill="none" stroke="#e8e8e8" stroke-width="1.3"/><path d="M0.4 7H22.6L23 22.5Q23 24 21.5 24H1.5Q0 24 0 22.5Z" fill="#fff"/><rect x="6.2" y="10" width="4.6" height="4.6" fill="#f25022"/><rect x="12" y="10" width="4.600000000000001" height="4.6" fill="#7fba00"/><rect x="6.2" y="15.8" width="4.6" height="4.6" fill="#00a4ef"/><rect x="12" y="15.8" width="4.600000000000001" height="4.6" fill="#ffb900"/></svg>
  <!-- IE -->
  <svg class="abs" style="left:256px;top:7px" width="26" height="25"><ellipse cx="12.5" cy="13" rx="12" ry="5.2" transform="rotate(-38 12.5 13)" fill="none" stroke="#f5c51c" stroke-width="2"/><path d="M22.3 15.5H9.2A4.6 4.6 0 0 0 17.6 17.3H22A9 9 0 1 1 22.3 15.5ZM9.3 12H17.7A4.3 4.3 0 0 0 9.3 12Z" fill="#35b2ee"/><path d="M3 21C1 24 4 25 8 22" fill="none" stroke="#f5c51c" stroke-width="2"/></svg>
  <!-- outlook -->
  <svg class="abs" style="left:306px;top:8px" width="28" height="27"><path d="M11 4H24V19H11Z" fill="#fff"/><path d="M11 4H24V7L17.5 12L11 7Z" fill="#1b79c9"/><path d="M12.5 5.5L17.5 10L22.5 5.5Z" fill="#cfe4f7"/><path d="M0 3L13.5 0.5V22.5L0 20Z" fill="#0a6cc2"/><ellipse cx="6.8" cy="11.5" rx="3.2" ry="4.2" fill="none" stroke="#fff" stroke-width="1.9"/><path d="M11 15.5H26.5V26H11Z" fill="#f3c28c"/><path d="M11 15.5L18.7 22L26.5 15.5" fill="none" stroke="#d9934a" stroke-width="1.3"/></svg>
  <!-- word -->
  <svg class="abs" style="left:355px;top:9px" width="24" height="22"><path d="M10 2.5H23V19.5H10Z" fill="#fff"/><path d="M13.5 5.5H21.5M13.5 8.3H21.5M13.5 11.1H21.5M13.5 13.9H21.5M13.5 16.700000000000003H21.5" stroke="#2b579a" stroke-width="1.2"/><path d="M0 2.6L13 0.3V21.7L0 19.4Z" fill="#2b579a"/><path d="M2.6 7L4.3 15L6.4 8.5L8.5 15L10.3 7" fill="none" stroke="#fff" stroke-width="1.5"/></svg>
  <!-- chrome -->
  <svg class="abs" style="left:404px;top:8px" width="24" height="24" viewBox="-12 -12 24 24"><circle r="11.2" fill="#4caf50"/><path d="M0 0L-9.7 -5.6A11.2 11.2 0 0 1 9.7 -5.6Z" fill="#db4437"/><path d="M0 0L9.7 -5.6A11.2 11.2 0 0 1 0 11.2L4.5 2.6Z" fill="#ffcd40"/><path d="M0 -5.2H9.9L9.7 -5.6A11.2 11.2 0 0 0 -9.7 -5.6L-4.5 2.6Z" fill="#db4437"/><circle r="5.2" fill="#fff"/><circle r="4.1" fill="#4285f4"/></svg>
  <!-- remote -->
  <svg class="abs" style="left:454px;top:7px" width="25" height="27"><path d="M2 1L20 3.5V17L2 18.5Z" fill="#b9c6d6"/><path d="M4 3.3L18.3 5.3V15.3L4 16.4Z" fill="#2238cf"/><path d="M10 4.2L18.3 5.3V15.3L13 15.7Z" fill="#5b8cf0"/><path d="M8 18.5L14 18V21L17 22.5V24H5V22.5L8 21Z" fill="#d5dae0"/><circle cx="17.5" cy="20.5" r="5.2" fill="#e4e4e4"/><circle cx="17.5" cy="20.5" r="4.3" fill="#c9cfc9"/><path d="M15.2 18.6L17 20.5L15.2 22.4M19.8 18.6L18 20.5L19.8 22.4" fill="none" stroke="#2f9a3a" stroke-width="1.3"/></svg>
  <!-- underlines -->
  <div class="abs" style="left:151px;top:38px;width:40px;height:2px;background:#7ab8ea"></div>
  <div class="abs" style="left:298px;top:38px;width:40px;height:2px;background:#7ab8ea"></div>
  <div class="abs" style="left:347px;top:38px;width:40px;height:2px;background:#7ab8ea"></div>
  <div class="abs" style="left:380px;top:38px;width:7px;height:2px;background:#4f83b0"></div>
  <div class="abs" style="left:392px;top:38px;width:48px;height:2px;background:#7ab8ea"></div>
  <div class="abs" style="left:445px;top:38px;width:41px;height:2px;background:#7ab8ea"></div>
  <!-- tray -->
  <svg class="abs" style="left:1410px;top:16px" width="14" height="8"><path d="M1 7L7 1L13 7" fill="none" stroke="#fff" stroke-width="1.2"/></svg>
  <svg class="abs" style="left:1433px;top:13px" width="17" height="15"><rect x="3.5" y="1.5" width="12" height="9" fill="none" stroke="#fff" stroke-width="1.1"/><rect x="0.6" y="1.2" width="3.6" height="3.6" fill="#0a0c12" stroke="#fff" stroke-width="0.9"/><path d="M2.4 5V13.5M2.4 13.5H12M9 10.500000000000002V13.5" fill="none" stroke="#fff" stroke-width="1"/></svg>
  <svg class="abs" style="left:1456px;top:13px" width="16" height="14"><path d="M1 4.5H3.5L7 1V13L3.5 9.5H1Z" fill="none" stroke="#fff" stroke-width="1"/><path d="M9.5 4.5L14.5 9.5M14.5 4.5L9.5 9.5" stroke="#fff" stroke-width="1.1"/></svg>
  <div class="txt" style="letter-spacing:-1.02px;left:1499px;top:5.00px;font-size:11.5px;color:#fff">13:01</div>
  <div class="txt" style="letter-spacing:-0.18px;left:1483.4px;top:23.00px;font-size:11.5px;color:#fff">09-01-2019</div>
  <svg class="abs" style="left:1557px;top:10px" width="28" height="28"><path d="M2 2H18.5V15H8L4.5 18V15H2Z" fill="#fff"/><path d="M4.5 5H16M4.5 7.8H16M4.5 10.600000000000001H16" stroke="#0a0c12" stroke-width="1.2"/><circle cx="17.6" cy="17" r="7.6" fill="#2b2b2b" stroke="#8a8a8a" stroke-width="1"/><path d="M15.800000000000002 14.3L17.8 13V21" fill="none" stroke="#fff" stroke-width="1.5"/></svg>
  <div class="abs" style="left:1595px;top:0;width:1px;height:40px;background:#5a5a5a"></div>
</div>
</div>
</body>
</html>
